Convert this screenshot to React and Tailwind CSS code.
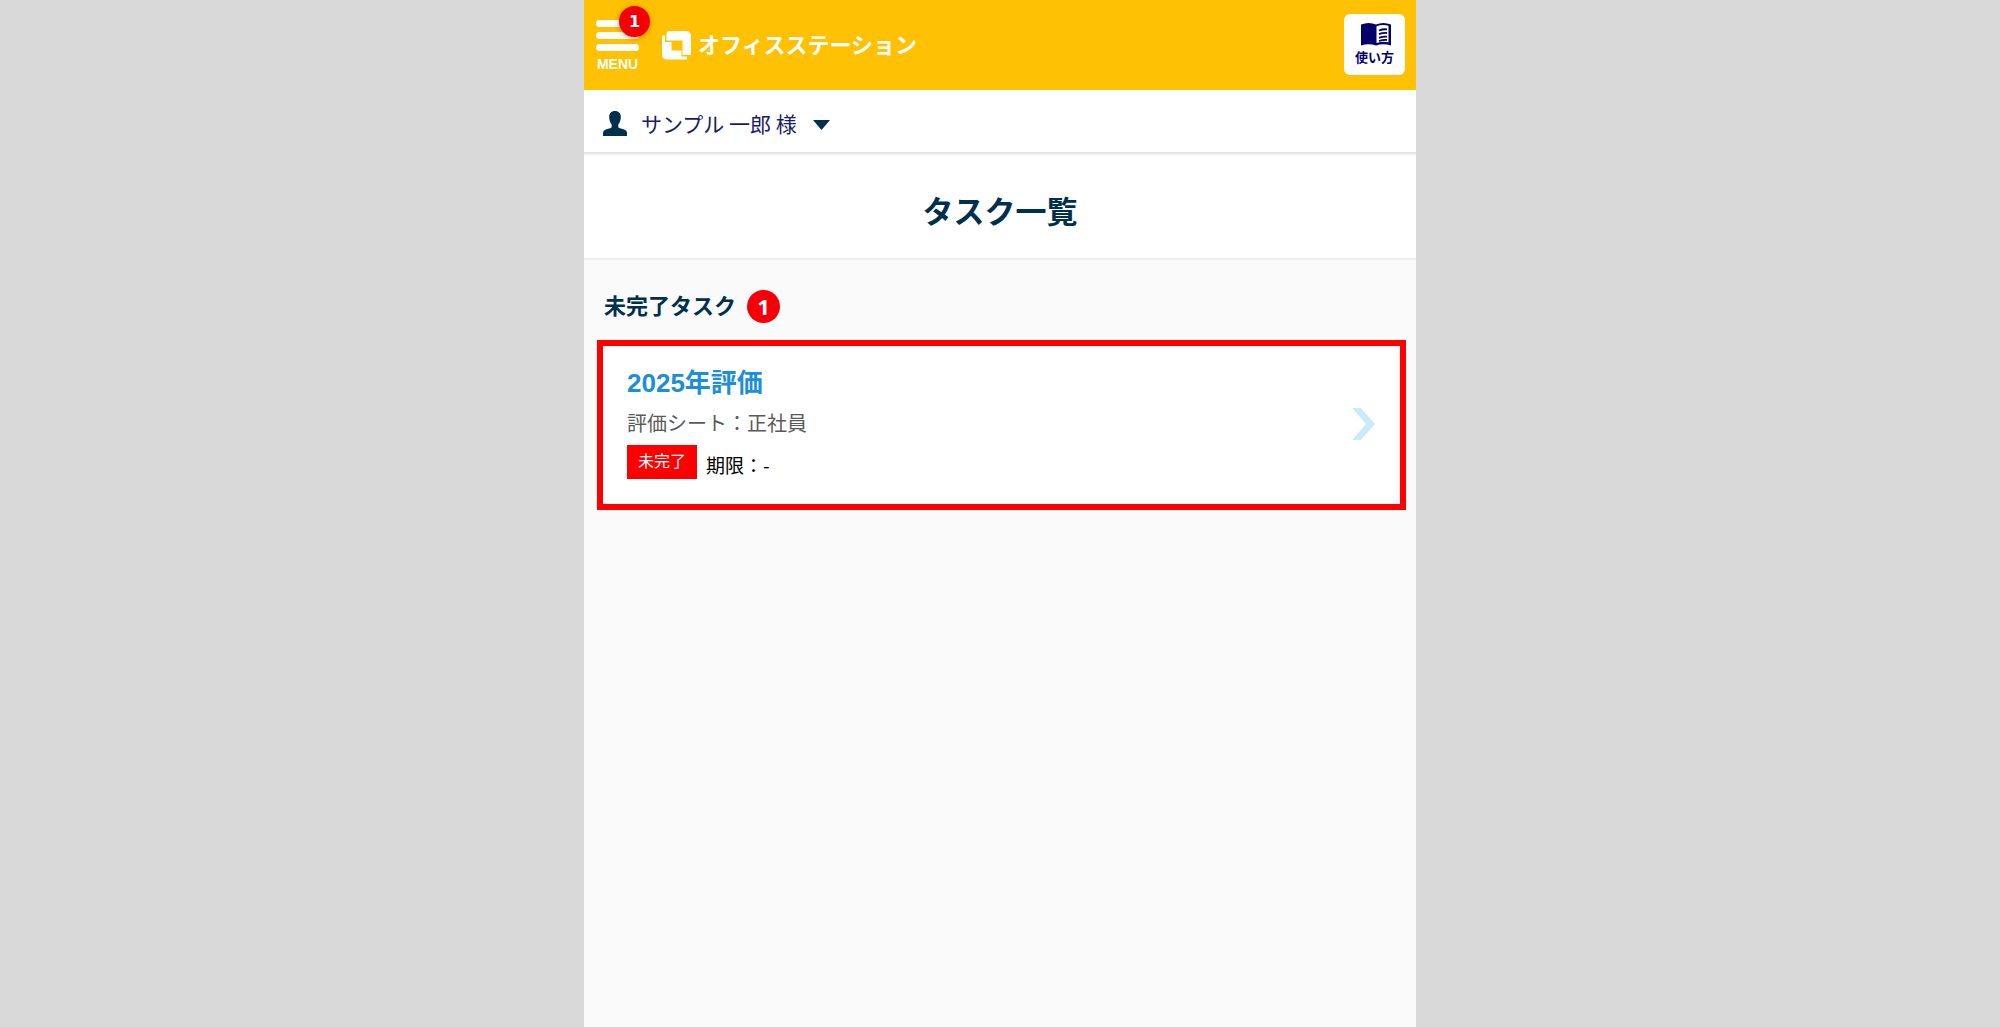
import React from "react";

function LogoMark() {
  return (
    <svg viewBox="0 0 29 29" className="size-[29px]" fill="#fff" aria-hidden="true">
      <path d="M7 0H24Q29 0 29 5V24H20.500V9.500H4.500V2.500Q4.500 0 7 0Z" />
      <path d="M0 4.500H3V11H9.500V19.500H19.500V25.500H25V28.500H5Q0 28.500 0 23.500Z" />
    </svg>
  );
}

function PersonIcon() {
  return (
    <svg viewBox="0 0 24 25" className="h-[25px] w-6" fill="#00304d" aria-hidden="true">
      <path d="M12 0C15.800 0 18 2.300 17.800 6.500C17.600 9.500 16.700 12 15.300 13.500V15.500C15.300 16.500 16 17 18 17.600C22 18.800 24 19.500 24 22.500V25H0V22.500C0 19.500 2 18.800 6 17.600C8 17 8.700 16.500 8.700 15.500V13.500C7.300 12 6.400 9.500 6.200 6.500C6 2.300 8.200 0 12 0Z" />
    </svg>
  );
}

function GuideIcon() {
  return (
    <svg viewBox="0 0 30 23" className="ml-0.5 h-[23px] w-[30px]" aria-hidden="true">
      <path
        d="M0 1.500Q8-1.500 15 1.500Q22-1.500 30 1.500V22.500Q22 20 15 22.500Q8 20 0 22.500Z"
        fill="#03006b"
      />
      <path d="M15.500 3.300Q21.500 1 27.500 2.800V19.300Q21.500 18 15.500 20Z" fill="#fff" />
      <path
        d="M18 7.500Q21.500 6 26 6.300M18 11.200Q21.500 9.700 26 10M18 14.900Q21.500 13.400 26 13.700M18 18Q21.500 16.800 26 17"
        fill="none"
        stroke="#03006b"
        strokeWidth="1.800"
      />
    </svg>
  );
}

function Header() {
  return (
    <header className="flex h-[90px] items-start justify-between bg-[#ffc103] pr-[11px] pl-3">
      <div className="flex items-start gap-[23px]">
        <button type="button" className="relative flex w-[43px] flex-col gap-[5px] pt-5">
          <span className="h-[7px] w-full rounded-full bg-white" />
          <span className="h-[7px] w-full rounded-full bg-white" />
          <span className="h-[7px] w-full rounded-full bg-white" />
          <span className="text-center font-['Liberation_Sans',sans-serif] text-sm leading-4 font-bold text-white">
            MENU
          </span>
          <span className="absolute top-1.5 left-[23px] flex size-[31px] items-center justify-center rounded-full bg-[#f50008] font-['DejaVu_Sans',sans-serif] text-base leading-none font-bold text-white shadow-[0_1px_5px_rgba(90,60,0,0.5)]">
            1
          </span>
        </button>
        <a href="#" className="flex items-center gap-[7px] pt-[27px] text-[22px] leading-8 font-bold text-white">
          <LogoMark />
          <span className="pb-1">オフィスステーション</span>
        </a>
      </div>
      <button
        type="button"
        className="mt-3.5 flex h-[61px] w-[61px] flex-col items-center rounded-md bg-white pt-[9px] text-[13px] leading-[22px] font-bold text-[#03006b]"
      >
        <GuideIcon />
        使い方
      </button>
    </header>
  );
}

function UserBar() {
  return (
    <div className="flex h-[62px] items-center bg-white pt-1 pl-[19px]">
      <button type="button" className="flex items-center text-[21px] leading-6 text-[#151d66]">
        <PersonIcon />
        <span className="pl-3.5">サンプル 一郎 様</span>
        <svg viewBox="0 0 17 10" className="mt-1 ml-4 h-2.5 w-[17px]" fill="#00304d" aria-hidden="true">
          <path d="M0 0H17L8.500 10Z" />
        </svg>
      </button>
    </div>
  );
}

function TaskCard() {
  return (
    <div className="mr-2.5 ml-[13px] border-6 border-[#ff0000] bg-[#f5f7f9]">
      <a href="#" className="mr-0.5 flex items-center justify-between rounded-lg bg-white pt-[17px] pr-[23px] pb-[19px] pl-6">
        <div>
          <h3 className="font-['Liberation_Sans','Noto_Sans_CJK_JP',sans-serif] text-[26px] leading-10 font-bold text-[#1d8fd6]">
            2025年評価
          </h3>
          <p className="text-xl leading-10 text-[#5a5a5a]">評価シート：正社員</p>
          <div className="flex items-start gap-[9px]">
            <span className="mt-0.5 bg-[#ff0000] px-[11px] pb-1 text-base leading-[30px] text-white">未完了</span>
            <span className="pt-0.5 text-[19px] leading-10 text-black">期限：-</span>
          </div>
        </div>
        <svg viewBox="0 0 23 32" className="h-8 w-[23px]" fill="#c9eafb" aria-hidden="true">
          <path d="M0 0H9L23 16L9 32H0L14 16Z" />
        </svg>
      </a>
    </div>
  );
}

export default function App() {
  return (
    <div className="min-h-screen bg-[#d9d9d9] font-['Noto_Sans_CJK_JP',sans-serif]" lang="ja">
      <div className="mx-auto min-h-screen max-w-[832px] bg-[#fafafa]">
        <Header />
        <UserBar />
        <main>
          <div className="border-b-2 border-[#ededed] bg-white">
            <div className="h-1 bg-linear-to-b from-[#dedede] to-white" />
            <h1 className="pt-[31px] pb-[25px] text-center text-[31px] leading-[46px] font-bold text-[#00304d]">
              タスク一覧
            </h1>
          </div>
          <section>
            <div className="flex items-center gap-[11px] pt-[25px] pb-3 pl-5">
              <h2 className="pb-1 text-[22px] leading-[39px] font-bold text-[#00304d]">未完了タスク</h2>
              <span className="flex size-[33px] items-center justify-center rounded-full bg-[#f50008] pb-0.5 font-['Open_Sans',sans-serif] text-[22px] leading-none font-bold text-white">
                1
              </span>
            </div>
            <TaskCard />
          </section>
        </main>
      </div>
    </div>
  );
}
